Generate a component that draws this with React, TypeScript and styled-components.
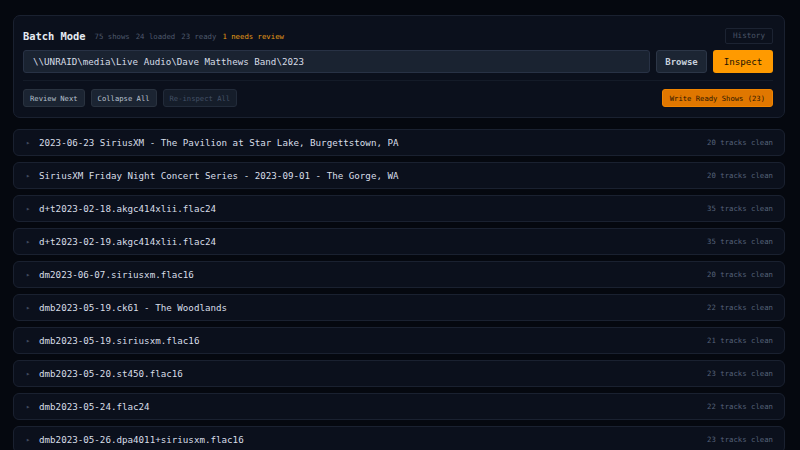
import React from "react";
import styled, { createGlobalStyle } from "styled-components";

const Global = createGlobalStyle`
  html, body { margin: 0; padding: 0; background: #05080f; overflow: hidden; }
  body { font-family: "DejaVu Sans Mono", "Liberation Mono", monospace; }
`;

const Page = styled.div`
  padding: 15px 15px 15px 13px;
  display: flex;
  flex-direction: column;
  gap: 11px;
`;

const Card = styled.section`
  background: #0b101c;
  border: 1px solid #1a2130;
  border-radius: 7px;
  padding: 11px 11px 10px 9px;
  display: flex;
  flex-direction: column;
`;

const TitleRow = styled.div`
  display: flex;
  align-items: center;
  height: 17px;
`;

const Title = styled.h1`
  margin: 0;
  font-size: 10.4px;
  font-weight: bold;
  color: #e6ebf2;
`;

const Stats = styled.div`
  display: flex;
  gap: 6px;
  margin-left: 9px;
  font-size: 7.3px;
  margin-top: 1px;
`;

const Stat = styled.span<{ $warn?: boolean }>`
  color: ${(p) => (p.$warn ? "#e39a17" : "#4f5a6d")};
`;

const Spacer = styled.div`
  flex: 1;
`;

const GhostButton = styled.button`
  font-family: inherit;
  font-size: 7.6px;
  color: #4a5466;
  background: transparent;
  border: 1px solid #1c2332;
  border-radius: 2px;
  height: 16px;
  width: 48px;
  padding: 0;
`;

const PathRow = styled.div`
  display: flex;
  gap: 6px;
  margin-top: 6px;
  height: 23px;
`;

const PathInput = styled.div`
  flex: 1;
  background: #1a2331;
  border: 1px solid #283245;
  border-radius: 3px;
  display: flex;
  align-items: center;
  padding: 0 9px;
  font-size: 9.2px;
  color: #d6dce6;
`;

const BrowseButton = styled.button`
  font-family: inherit;
  font-size: 9px;
  font-weight: bold;
  color: #c9d1dc;
  background: #1c2533;
  border: 1px solid #2c3647;
  border-radius: 3px;
  width: 51px;
  padding: 0;
`;

const InspectButton = styled.button`
  font-family: inherit;
  font-size: 9.2px;
  color: #1a1204;
  background: #ff9a00;
  border: none;
  border-radius: 3px;
  width: 60px;
  padding: 0;
`;

const Divider = styled.div`
  height: 1px;
  background: #141b28;
  margin: 7px 0 8px;
`;

const ActionRow = styled.div`
  display: flex;
  gap: 6px;
  align-items: center;
  height: 18px;
`;

const SmallButton = styled.button<{ $disabled?: boolean }>`
  font-family: inherit;
  font-size: 7.2px;
  color: ${(p) => (p.$disabled ? "#435066" : "#b8c2d0")};
  background: ${(p) => (p.$disabled ? "#151d2a" : "#1b2432")};
  border: 1px solid ${(p) => (p.$disabled ? "#222b3a" : "#29323f")};
  border-radius: 3px;
  height: 18px;
  padding: 0 6px;
`;

const WriteButton = styled.button`
  font-family: inherit;
  font-size: 7.2px;
  color: #2a1500;
  background: #e07700;
  border: 1px solid #f08400;
  border-radius: 3px;
  height: 18px;
  padding: 0 7px;
`;

const List = styled.div`
  display: flex;
  flex-direction: column;
  gap: 6px;
`;

const Row = styled.div`
  height: 27px;
  box-sizing: border-box;
  background: #0b101c;
  border: 1px solid #1a2130;
  border-radius: 6px;
  display: flex;
  align-items: center;
  padding: 0 11px 0 12px;
`;

const Caret = styled.span`
  font-size: 7px;
  color: #3f4a5c;
  width: 13px;
`;

const RowName = styled.span`
  font-size: 9.2px;
  color: #d8dee8;
  flex: 1;
  white-space: nowrap;
`;

const RowMeta = styled.span`
  font-size: 7.3px;
  color: #56627a;
`;

const shows: [string, number][] = [
  ["2023-06-23 SiriusXM - The Pavilion at Star Lake, Burgettstown, PA", 20],
  ["SiriusXM Friday Night Concert Series - 2023-09-01 - The Gorge, WA", 20],
  ["d+t2023-02-18.akgc414xlii.flac24", 35],
  ["d+t2023-02-19.akgc414xlii.flac24", 35],
  ["dm2023-06-07.siriusxm.flac16", 20],
  ["dmb2023-05-19.ck61 - The Woodlands", 22],
  ["dmb2023-05-19.siriusxm.flac16", 21],
  ["dmb2023-05-20.st450.flac16", 23],
  ["dmb2023-05-24.flac24", 22],
  ["dmb2023-05-26.dpa4011+siriusxm.flac16", 23],
];

export default function App() {
  return (
    <>
      <Global />
      <Page>
        <Card>
          <TitleRow>
            <Title>Batch Mode</Title>
            <Stats>
              <Stat>75 shows</Stat>
              <Stat>24 loaded</Stat>
              <Stat>23 ready</Stat>
              <Stat $warn>1 needs review</Stat>
            </Stats>
            <Spacer />
            <GhostButton>History</GhostButton>
          </TitleRow>
          <PathRow>
            <PathInput>{"\\\\UNRAID\\media\\Live Audio\\Dave Matthews Band\\2023"}</PathInput>
            <BrowseButton>Browse</BrowseButton>
            <InspectButton>Inspect</InspectButton>
          </PathRow>
          <Divider />
          <ActionRow>
            <SmallButton>Review Next</SmallButton>
            <SmallButton>Collapse All</SmallButton>
            <SmallButton $disabled>Re-inspect All</SmallButton>
            <Spacer />
            <WriteButton>Write Ready Shows (23)</WriteButton>
          </ActionRow>
        </Card>
        <List>
          {shows.map(([name, n]) => (
            <Row key={name}>
              <Caret>▸</Caret>
              <RowName>{name}</RowName>
              <RowMeta>{n} tracks clean</RowMeta>
            </Row>
          ))}
        </List>
      </Page>
    </>
  );
}
